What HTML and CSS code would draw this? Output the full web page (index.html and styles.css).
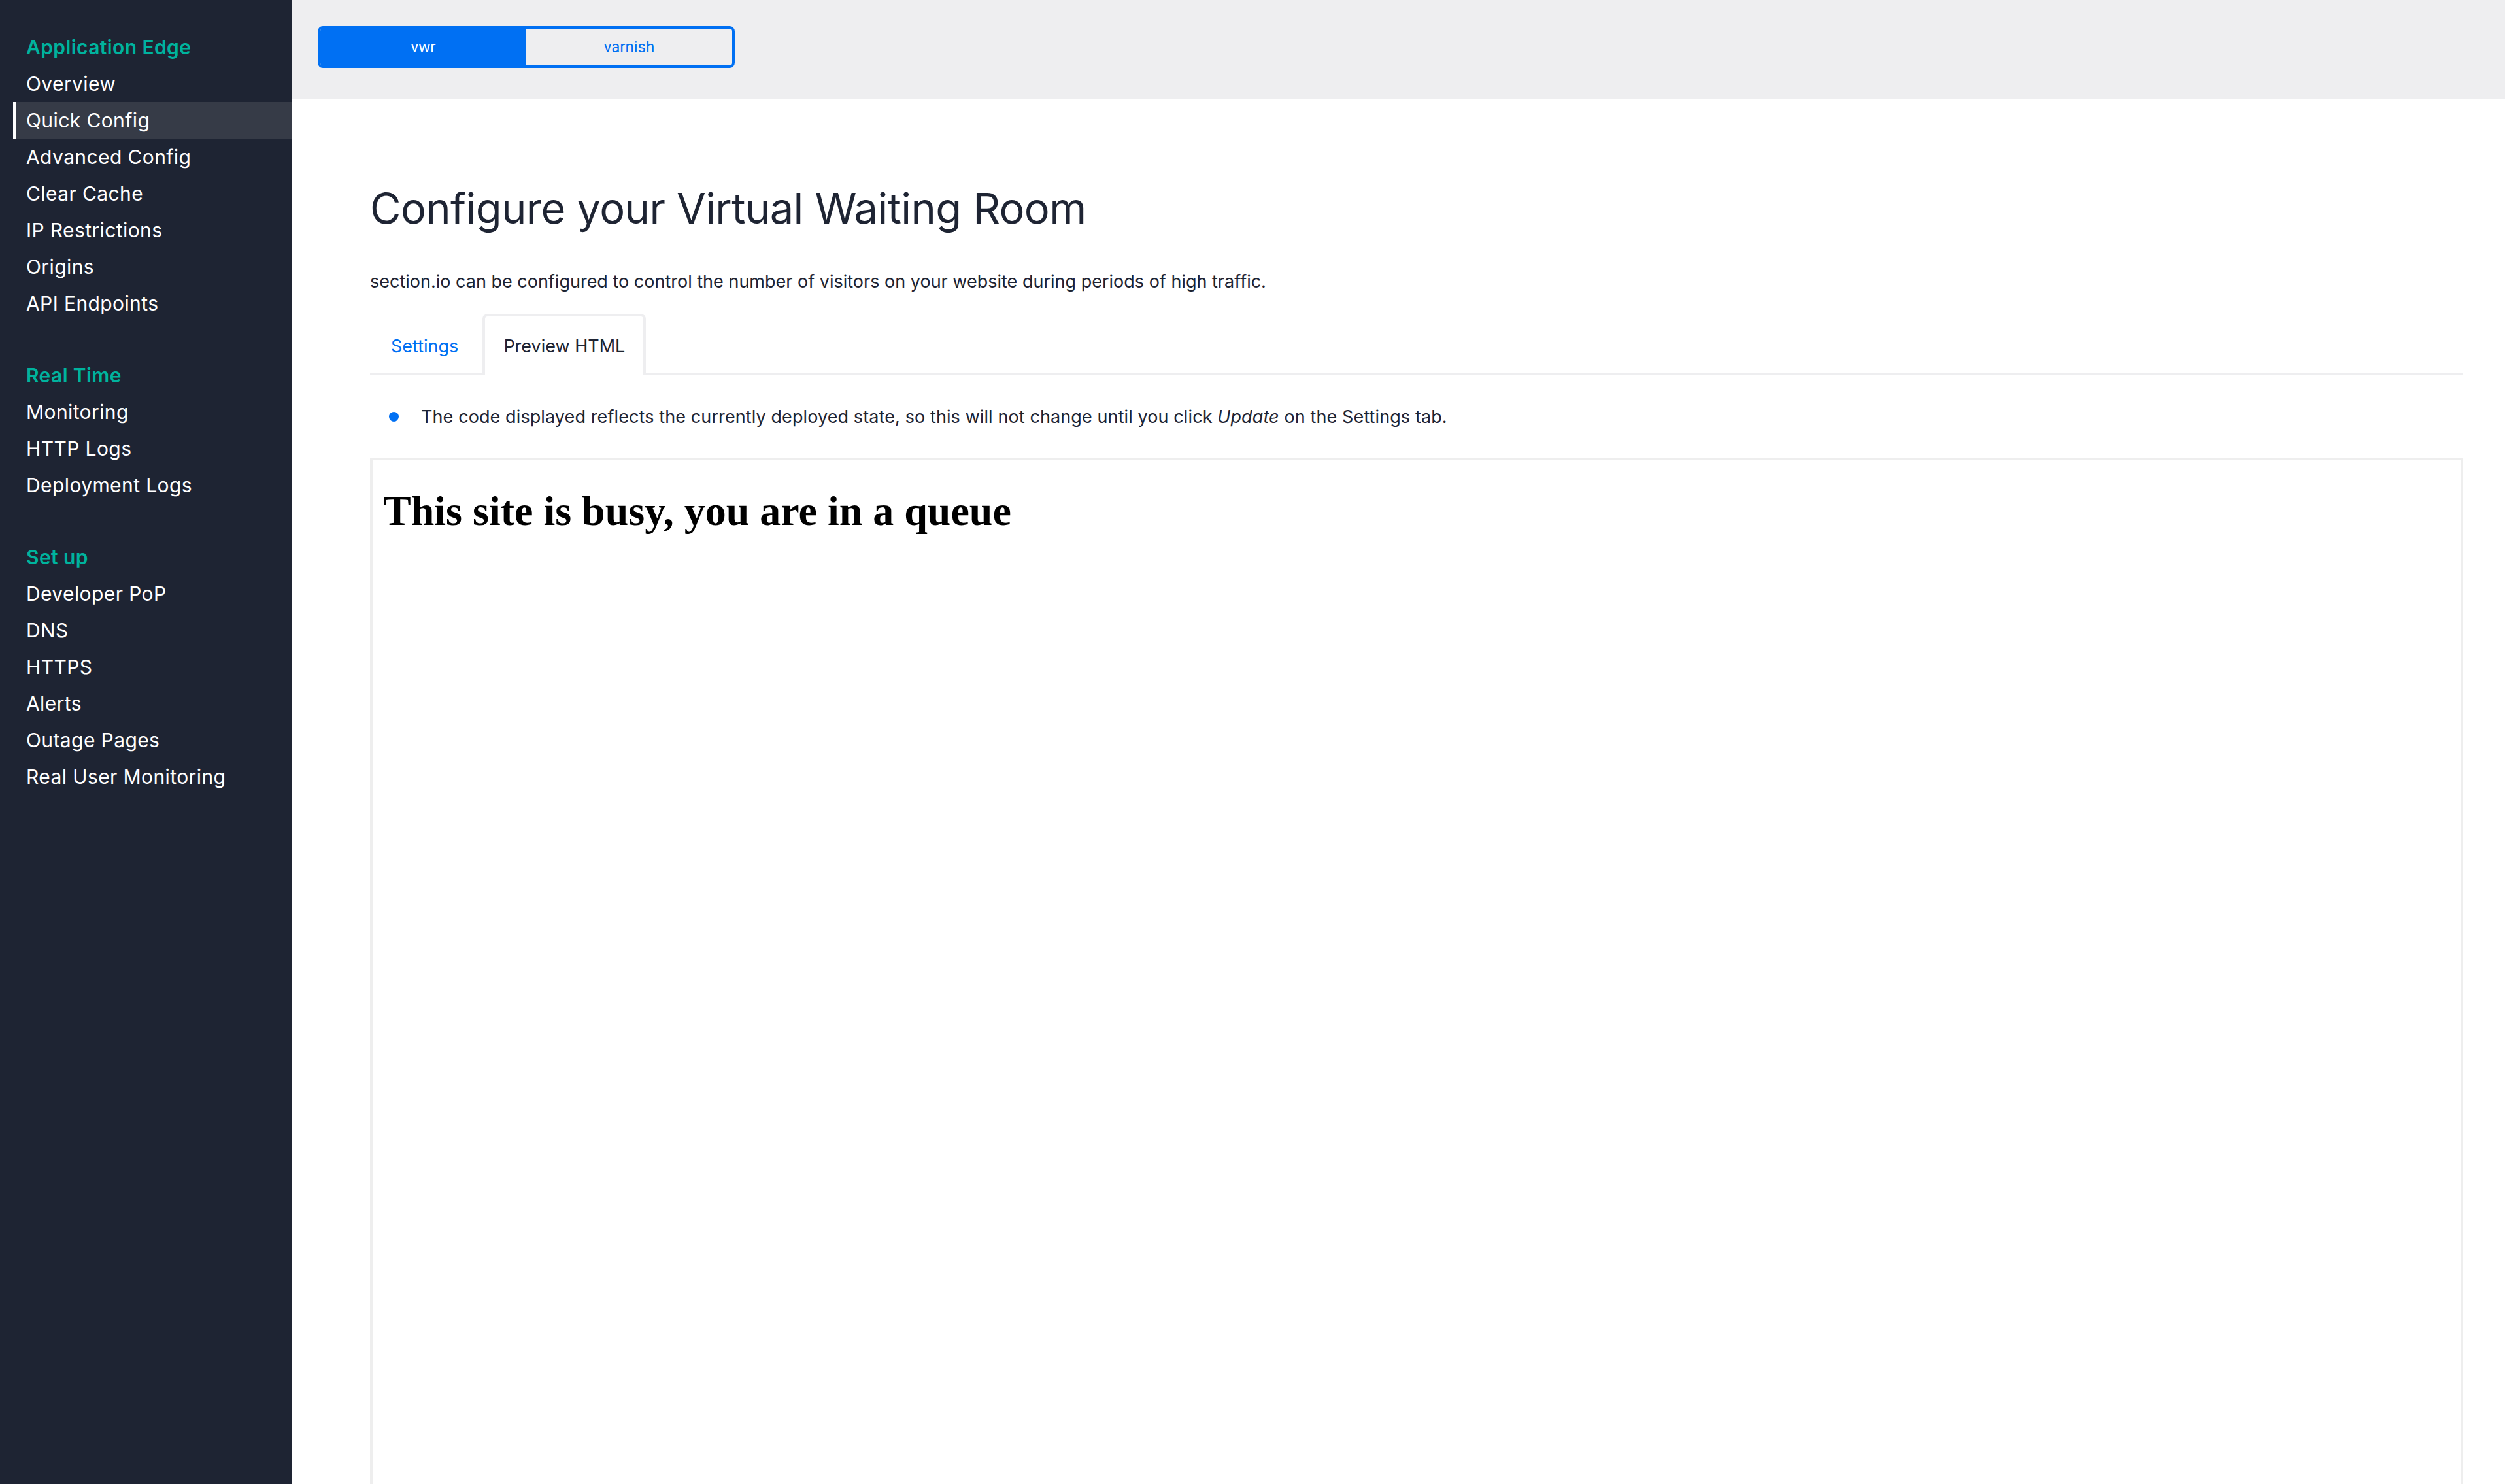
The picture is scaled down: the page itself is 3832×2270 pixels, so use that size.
FILE: index.html
```html
<!DOCTYPE html>
<html lang="en">
<head>
<meta charset="utf-8">
<title>Configure your Virtual Waiting Room</title>
<link rel="stylesheet" href="styles.css">
</head>
<body>
<div class="app">
  <aside class="sidebar">
    <nav class="nav-section">
      <div class="nav-title">Application Edge</div>
      <a class="nav-item">Overview</a>
      <a class="nav-item active">Quick Config</a>
      <a class="nav-item">Advanced Config</a>
      <a class="nav-item">Clear Cache</a>
      <a class="nav-item">IP Restrictions</a>
      <a class="nav-item">Origins</a>
      <a class="nav-item">API Endpoints</a>
    </nav>
    <nav class="nav-section">
      <div class="nav-title">Real Time</div>
      <a class="nav-item">Monitoring</a>
      <a class="nav-item">HTTP Logs</a>
      <a class="nav-item">Deployment Logs</a>
    </nav>
    <nav class="nav-section">
      <div class="nav-title">Set up</div>
      <a class="nav-item">Developer PoP</a>
      <a class="nav-item">DNS</a>
      <a class="nav-item">HTTPS</a>
      <a class="nav-item">Alerts</a>
      <a class="nav-item">Outage Pages</a>
      <a class="nav-item">Real User Monitoring</a>
    </nav>
  </aside>
  <div class="main">
    <header class="topbar">
      <div class="seg">
        <button class="seg-btn active">vwr</button>
        <button class="seg-btn">varnish</button>
      </div>
    </header>
    <section class="content">
      <h1 class="title">Configure your Virtual Waiting Room</h1>
      <p class="lead">section.io can be configured to control the number of visitors on your website during periods of high traffic.</p>
      <div class="tabs">
        <a class="tab">Settings</a>
        <a class="tab active">Preview HTML</a>
      </div>
      <ul class="notice">
        <li>The code displayed reflects the currently deployed state, so this will not change until you click <em>Update</em> on the Settings tab.</li>
      </ul>
      <div class="preview">
        <h1 class="preview-heading">This site is busy, you are in a queue</h1>
      </div>
    </section>
  </div>
</div>
</body>
</html>
```

FILE: styles.css
```css
html, body {
  margin: 0;
  padding: 0;
  height: 100%;
  overflow: hidden;
  background: #ffffff;
}

body {
  font-family: "Inter", "Noto Sans", sans-serif;
  color: #1e2433;
}

.app {
  display: flex;
  min-height: 100vh;
}

/* Sidebar */
.sidebar {
  width: 446px;
  flex: 0 0 446px;
  background: #1e2433;
  padding-top: 44px;
  box-sizing: border-box;
}

.nav-section {
  display: flex;
  flex-direction: column;
  margin-bottom: 54px;
}

.nav-title,
.nav-item {
  height: 56px;
  display: flex;
  align-items: center;
  margin-left: 20px;
  border-left: 4px solid transparent;
  padding-left: 16px;
  font-size: 30px;
  letter-spacing: 0.4px;
}

.nav-title {
  color: #00b39e;
  font-weight: 600;
}

.nav-item {
  color: #ffffff;
  font-weight: 400;
}

.nav-item.active {
  background: #363b47;
  border-left-color: #ffffff;
}

/* Main */
.main {
  flex: 1;
  display: flex;
  flex-direction: column;
  min-width: 0;
}

.topbar {
  height: 152px;
  background: #eeeef0;
  padding: 40px 40px;
  box-sizing: border-box;
  display: flex;
  align-items: flex-start;
}

.seg {
  display: flex;
  width: 638px;
  height: 64px;
  box-sizing: border-box;
  border: 4px solid #0070f3;
  border-radius: 8px;
  overflow: hidden;
}

.seg-btn {
  flex: 1;
  border: 0;
  margin: 0;
  padding: 0;
  background: transparent;
  color: #0070f3;
  font-family: "Roboto", "Liberation Sans", sans-serif;
  font-size: 24px;
}

.seg-btn.active {
  background: #0070f3;
  color: #ffffff;
}

.content {
  padding: 128px 64px 0 120px;
  display: flex;
  flex-direction: column;
}

.title {
  margin: 0;
  font-size: 65px;
  font-weight: 400;
  line-height: 78px;
  color: #1e2433;
  letter-spacing: -0.6px;
}

.lead {
  margin: 53px 0 0;
  font-size: 27px;
  line-height: 39px;
  color: #1e2433;
}

.tabs {
  margin-top: 30px;
  display: flex;
  gap: 5px;
  border-bottom: 4px solid #eeeef0;
  height: 90px;
}

.tab {
  display: flex;
  align-items: center;
  padding: 0 28px;
  font-size: 27px;
  color: #0070f3;
  border: 4px solid transparent;
  border-bottom: 0;
  border-radius: 8px 8px 0 0;
  margin-bottom: -4px;
  height: 94px;
  box-sizing: border-box;
}

.tab.active {
  color: #1e2433;
  background: #ffffff;
  border-color: #eeeef0;
}

.notice {
  list-style: none;
  margin: 0;
  padding: 46px 0 44px 29px;
}

.notice li {
  display: block;
  font-size: 27px;
  line-height: 36px;
  letter-spacing: 0.1px;
  color: #1e2433;
}

.notice li::before {
  content: "";
  display: inline-block;
  vertical-align: middle;
  width: 15px;
  height: 15px;
  border-radius: 50%;
  background: #0070f3;
  margin: -4px 34px 0 0;
}

.preview {
  border: 4px solid #eeeeee;
  border-bottom: 0;
  height: 1700px;
  padding: 0 16px;
}

.preview-heading {
  margin: 41px 0 0;
  font-family: "Liberation Serif", "Times New Roman", serif;
  font-size: 64px;
  font-weight: 700;
  color: #000000;
}
```
